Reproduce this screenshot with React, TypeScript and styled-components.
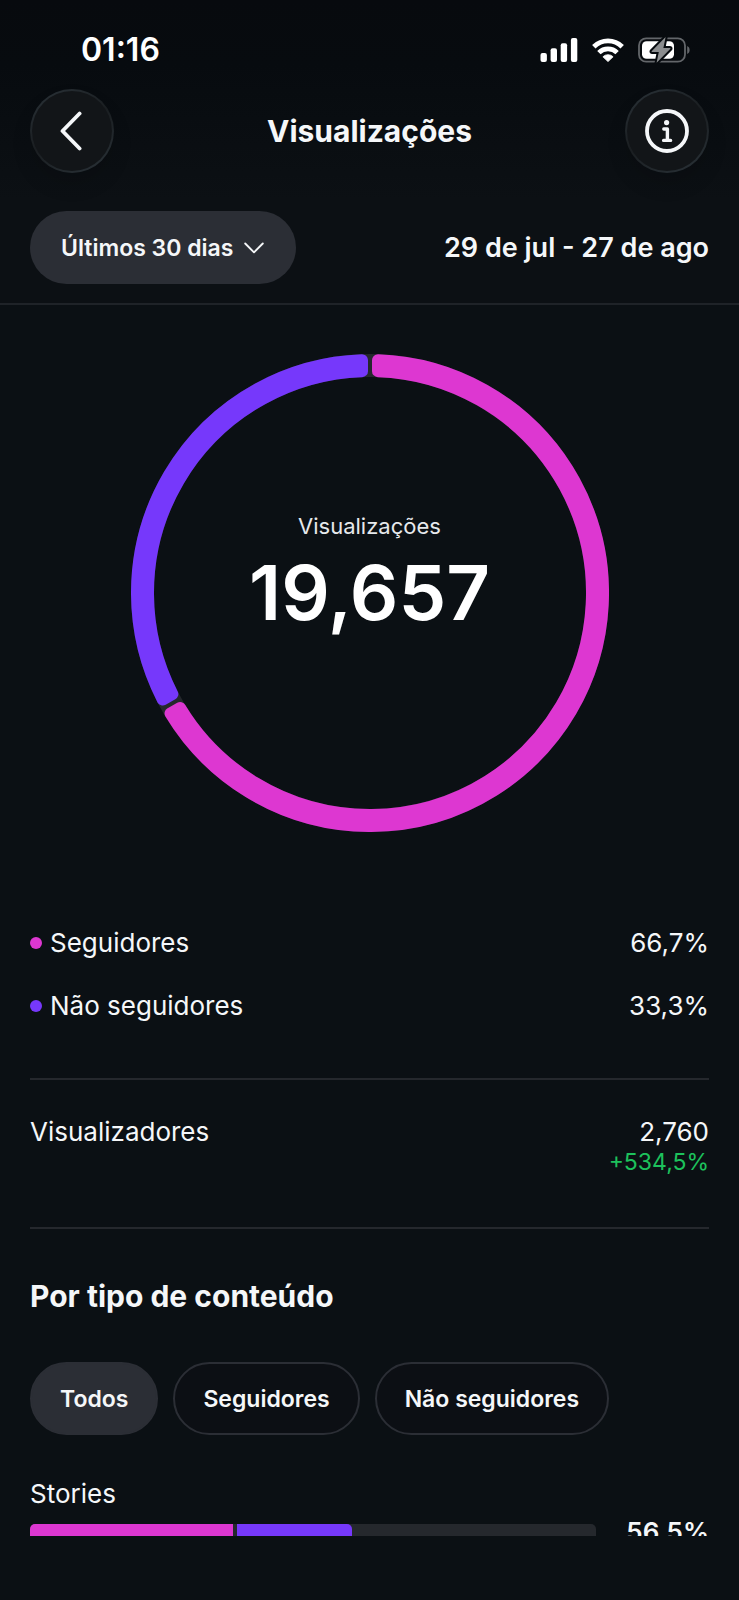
import React from "react";
import styled, { createGlobalStyle } from "styled-components";

const pink = "#dd37d1";
const violet = "#7638fb";
const surface = "#2b2e35";
const line = "#25282d";
const text = "#f5f7f9";

const GlobalStyle = createGlobalStyle`
  * { box-sizing: border-box; }
  html, body { margin: 0; padding: 0; background: #0b1014; }
  body, button, select { font-family: Inter, "Noto Sans", sans-serif; color: ${text}; }
`;

const Screen = styled.div`
  display: flex;
  flex-direction: column;
  height: 100vh;
  background: #0b1014;
`;

const Top = styled.header`
  flex: none;
  background: linear-gradient(#070a0e 0, #070b0f 64px, #0c1014 200px);
  border-bottom: 2px solid #1f2328;
`;

const StatusBar = styled.div`
  display: flex;
  align-items: center;
  justify-content: space-between;
  height: 89px;
  padding: 10px 48px 0 81px;
`;

const Clock = styled.time`
  font-size: 32px;
  line-height: 40px;
  font-weight: 600;
  color: #fff;
`;

const StatusIcons = styled.div`
  display: flex;
  align-items: center;
  gap: 14px;
`;

const NavBar = styled.div`
  display: flex;
  align-items: center;
  justify-content: space-between;
  padding: 0 30px;
`;

const Title = styled.h1`
  margin: 0;
  font-size: 30px;
  line-height: 40px;
  font-weight: 700;
`;

const RoundButton = styled.button`
  display: grid;
  place-items: center;
  width: 84px;
  height: 84px;
  padding: 0;
  border: 2px solid transparent;
  border-radius: 50%;
  background:
    linear-gradient(#121518, #121518) padding-box,
    linear-gradient(150deg, #2b3339, #1a1e21 48%, #2b3339) border-box;
  box-shadow: 0 12px 20px rgba(0, 0, 0, 0.12);
  cursor: pointer;
`;

const FilterBar = styled.div`
  display: flex;
  align-items: center;
  justify-content: space-between;
  padding: 38px 30px 19px;
`;

const PeriodField = styled.label`
  display: grid;
  align-items: center;
  & > * { grid-area: 1 / 1; }
  & > svg { justify-self: end; margin-right: 32px; pointer-events: none; }
`;

const PeriodSelect = styled.select`
  appearance: none;
  height: 73px;
  padding: 0 62px 0 31px;
  border: 0;
  border-radius: 37px;
  background: ${surface};
  font-size: 23px;
  font-weight: 600;
  cursor: pointer;
`;

const DateRange = styled.span`
  font-size: 27px;
  line-height: 32px;
  font-weight: 600;
`;

const Content = styled.main`
  flex: 1;
  min-height: 0;
  overflow-y: auto;
  scrollbar-width: none;
  padding: 0 30px 40px;
`;

const ChartBox = styled.div`
  display: grid;
  place-items: center;
  padding: 49px 0 95px;
  & > * { grid-area: 1 / 1; }
  & > svg { width: 478px; max-width: 100%; height: auto; }
`;

const ChartLabel = styled.div`
  display: flex;
  flex-direction: column;
  align-items: center;
  padding-bottom: 30px;
`;

const ChartCaption = styled.span`
  font-size: 22px;
  line-height: 28px;
  color: #e6e9ec;
`;

const ChartTotal = styled.strong`
  font-size: 76px;
  line-height: 104px;
  font-weight: 600;
  color: #fff;
`;

const Legend = styled.ul`
  display: flex;
  flex-direction: column;
  gap: 31px;
  margin: 0;
  padding: 0 0 56px;
  border-bottom: 2px solid ${line};
  list-style: none;
`;

const Row = styled.li`
  display: flex;
  align-items: center;
  font-size: 26px;
  line-height: 32px;
`;

const Dot = styled.span<{ $color: string }>`
  width: 12px;
  height: 12px;
  margin-right: 8px;
  border-radius: 50%;
  background: ${(p) => p.$color};
`;

const RowValue = styled.span`
  margin-left: auto;
`;

const Viewers = styled.section`
  display: flex;
  justify-content: space-between;
  padding: 36px 0 51px;
  border-bottom: 2px solid ${line};
  font-size: 26px;
  line-height: 32px;
`;

const ViewersValue = styled.div`
  display: flex;
  flex-direction: column;
  align-items: flex-end;
`;

const Growth = styled.span`
  font-size: 23px;
  line-height: 28px;
  color: #1dc15c;
`;

const SectionTitle = styled.h2`
  margin: 47px 0 46px;
  font-size: 30px;
  line-height: 40px;
  font-weight: 700;
`;

const Chips = styled.div`
  display: flex;
  flex-wrap: wrap;
  gap: 15px;
`;

const Chip = styled.button<{ $active?: boolean }>`
  height: 73px;
  padding: 0 28px;
  border: 2px solid ${surface};
  border-radius: 37px;
  background: ${(p) => (p.$active ? surface : "#0c0f14")};
  font-size: 23px;
  font-weight: 600;
  cursor: pointer;
`;

const TypeName = styled.div`
  margin-top: 43px;
  font-size: 26px;
  line-height: 32px;
`;

const BarRow = styled.div`
  display: flex;
  align-items: center;
  gap: 30px;
  margin-top: 6px;
`;

const Track = styled.div`
  display: flex;
  flex: 1;
  gap: 4px;
  height: 16px;
  border-radius: 5px;
  background: ${line};
  overflow: hidden;
`;

const Fill = styled.div<{ $color: string; $end?: boolean }>`
  background: ${(p) => p.$color};
  border-radius: ${(p) => (p.$end ? "0 5px 5px 0" : "0")};
`;

const BarValue = styled.span`
  font-size: 26px;
  line-height: 32px;
  font-weight: 600;
`;

const BottomInset = styled.footer`
  flex: none;
  height: 64px;
`;

const SIZE = 478;
const OUTER = 239;
const INNER = 216;
const CORNER = 6;
const GAP = 4;

/* Ring sector between two turn fractions; the stroke rounds its corners. */
function sectorPath(from: number, to: number) {
  const ro = OUTER - CORNER;
  const ri = INNER + CORNER;
  const inset = GAP / 2 + CORNER;
  const a = from * 2 * Math.PI;
  const b = to * 2 * Math.PI;
  const at = (r: number, angle: number) =>
    `${(OUTER + r * Math.sin(angle)).toFixed(2)} ${(OUTER - r * Math.cos(angle)).toFixed(2)}`;
  const large = to - from > 0.5 ? 1 : 0;
  return (
    `M${at(ro, a + inset / ro)} A${ro} ${ro} 0 ${large} 1 ${at(ro, b - inset / ro)} ` +
    `L${at(ri, b - inset / ri)} A${ri} ${ri} 0 ${large} 0 ${at(ri, a + inset / ri)} Z`
  );
}

const audience = [
  { name: "Seguidores", value: "66,7%", share: 0.669, color: pink },
  { name: "Não seguidores", value: "33,3%", share: 0.331, color: violet },
];

function Donut() {
  let start = 0;
  return (
    <svg viewBox={`0 0 ${SIZE} ${SIZE}`} aria-hidden="true">
      <circle cx={OUTER} cy={OUTER} r={(OUTER + INNER) / 2} fill="none" stroke={line} strokeWidth={OUTER - INNER} />
      {audience.map((item) => {
        const from = start;
        start += item.share;
        return (
          <path
            key={item.name}
            d={sectorPath(from, start)}
            fill={item.color}
            stroke={item.color}
            strokeWidth={CORNER * 2}
            strokeLinejoin="round"
          />
        );
      })}
    </svg>
  );
}

function SignalIcon() {
  return (
    <svg width="38" height="24" viewBox="0 0 38 24" fill="#fff" aria-hidden="true">
      <rect x="0.5" y="15" width="6.4" height="9" rx="2" />
      <rect x="10.6" y="10.2" width="6.4" height="13.8" rx="2" />
      <rect x="20.7" y="5.2" width="6.4" height="18.8" rx="2" />
      <rect x="30.9" y="0" width="6.4" height="24" rx="2" />
    </svg>
  );
}

function WifiIcon() {
  return (
    <svg width="32" height="24" viewBox="0 0 32 24" aria-hidden="true">
      <g fill="none" stroke="#fff" strokeWidth="4.8">
        <path d="M1.8 8.8 A20.2 20.2 0 0 1 30.2 8.8" />
        <path d="M6.9 14.6 A12.9 12.9 0 0 1 25.1 14.6" />
      </g>
      <path d="M16 23.6 L10.9 18.8 A7.2 7.2 0 0 1 21.1 18.8 Z" fill="#fff" stroke="#fff" strokeWidth="0.8" strokeLinejoin="round" />
    </svg>
  );
}

function BatteryIcon() {
  return (
    <svg width="53" height="28" viewBox="0 0 53 28" aria-hidden="true">
      <rect x="1" y="2.3" width="46" height="23.4" rx="7.2" fill="none" stroke="#63666a" strokeWidth="1.8" />
      <path d="M49.2 10 C52.4 11.2 52.4 16.8 49.2 18 Z" fill="#63666a" />
      <rect x="4" y="5.2" width="32" height="17.6" rx="4.6" fill="#fff" />
      <path
        d="M27.6 1 L13.6 15.2 Q13.2 16 14.2 16 L20.8 16 L18.6 26.8 L32.4 12.8 Q32.8 12 31.8 12 L25.4 12 Z"
        fill="#8b8d8f"
        stroke="#070b0f"
        strokeWidth="4"
        strokeLinejoin="round"
        paintOrder="stroke"
      />
    </svg>
  );
}

function BackIcon() {
  return (
    <svg width="24" height="42" viewBox="0 0 24 42" fill="none" stroke={text} strokeWidth="3.8" strokeLinecap="round" strokeLinejoin="round" aria-hidden="true">
      <path d="M19.6 3.5 L2.5 21 L19.6 38.5" />
    </svg>
  );
}

function InfoIcon() {
  return (
    <svg width="44" height="44" viewBox="0 0 44 44" fill="none" stroke={text} strokeLinecap="round" strokeLinejoin="round" aria-hidden="true">
      <circle cx="22" cy="22" r="20" strokeWidth="3.8" />
      <circle cx="21.6" cy="13.6" r="2.6" fill={text} stroke="none" />
      <path d="M18.8 20 H22.4 V31.2 M18.6 31.4 H25.6" strokeWidth="3.4" />
    </svg>
  );
}

function ChevronDown() {
  return (
    <svg width="20" height="12" viewBox="0 0 20 12" fill="none" stroke={text} strokeWidth="1.9" strokeLinecap="round" strokeLinejoin="round" aria-hidden="true">
      <path d="M1.2 1.5 L10 10.3 L18.8 1.5" />
    </svg>
  );
}

export default function App() {
  const [filter, setFilter] = React.useState("Todos");
  return (
    <Screen>
      <GlobalStyle />
      <Top>
        <StatusBar>
          <Clock>01:16</Clock>
          <StatusIcons>
            <SignalIcon />
            <WifiIcon />
            <BatteryIcon />
          </StatusIcons>
        </StatusBar>
        <NavBar>
          <RoundButton type="button" aria-label="Voltar">
            <BackIcon />
          </RoundButton>
          <Title>Visualizações</Title>
          <RoundButton type="button" aria-label="Informações">
            <InfoIcon />
          </RoundButton>
        </NavBar>
        <FilterBar>
          <PeriodField>
            <PeriodSelect aria-label="Período" defaultValue="30">
              <option value="7">Últimos 7 dias</option>
              <option value="30">Últimos 30 dias</option>
            </PeriodSelect>
            <ChevronDown />
          </PeriodField>
          <DateRange>29 de jul - 27 de ago</DateRange>
        </FilterBar>
      </Top>

      <Content>
        <ChartBox>
          <Donut />
          <ChartLabel>
            <ChartCaption>Visualizações</ChartCaption>
            <ChartTotal>19,657</ChartTotal>
          </ChartLabel>
        </ChartBox>

        <Legend>
          {audience.map((item) => (
            <Row key={item.name}>
              <Dot $color={item.color} />
              {item.name}
              <RowValue>{item.value}</RowValue>
            </Row>
          ))}
        </Legend>

        <Viewers>
          <span>Visualizadores</span>
          <ViewersValue>
            <span>2,760</span>
            <Growth>+534,5%</Growth>
          </ViewersValue>
        </Viewers>

        <SectionTitle>Por tipo de conteúdo</SectionTitle>
        <Chips>
          {["Todos", "Seguidores", "Não seguidores"].map((name) => (
            <Chip
              key={name}
              type="button"
              $active={filter === name}
              aria-pressed={filter === name}
              onClick={() => setFilter(name)}
            >
              {name}
            </Chip>
          ))}
        </Chips>

        <TypeName>Stories</TypeName>
        <BarRow>
          <Track>
            <Fill $color={pink} style={{ width: "35.9%" }} />
            <Fill $color={violet} $end style={{ width: "20.3%" }} />
          </Track>
          <BarValue>56,5%</BarValue>
        </BarRow>
      </Content>
      <BottomInset />
    </Screen>
  );
}
